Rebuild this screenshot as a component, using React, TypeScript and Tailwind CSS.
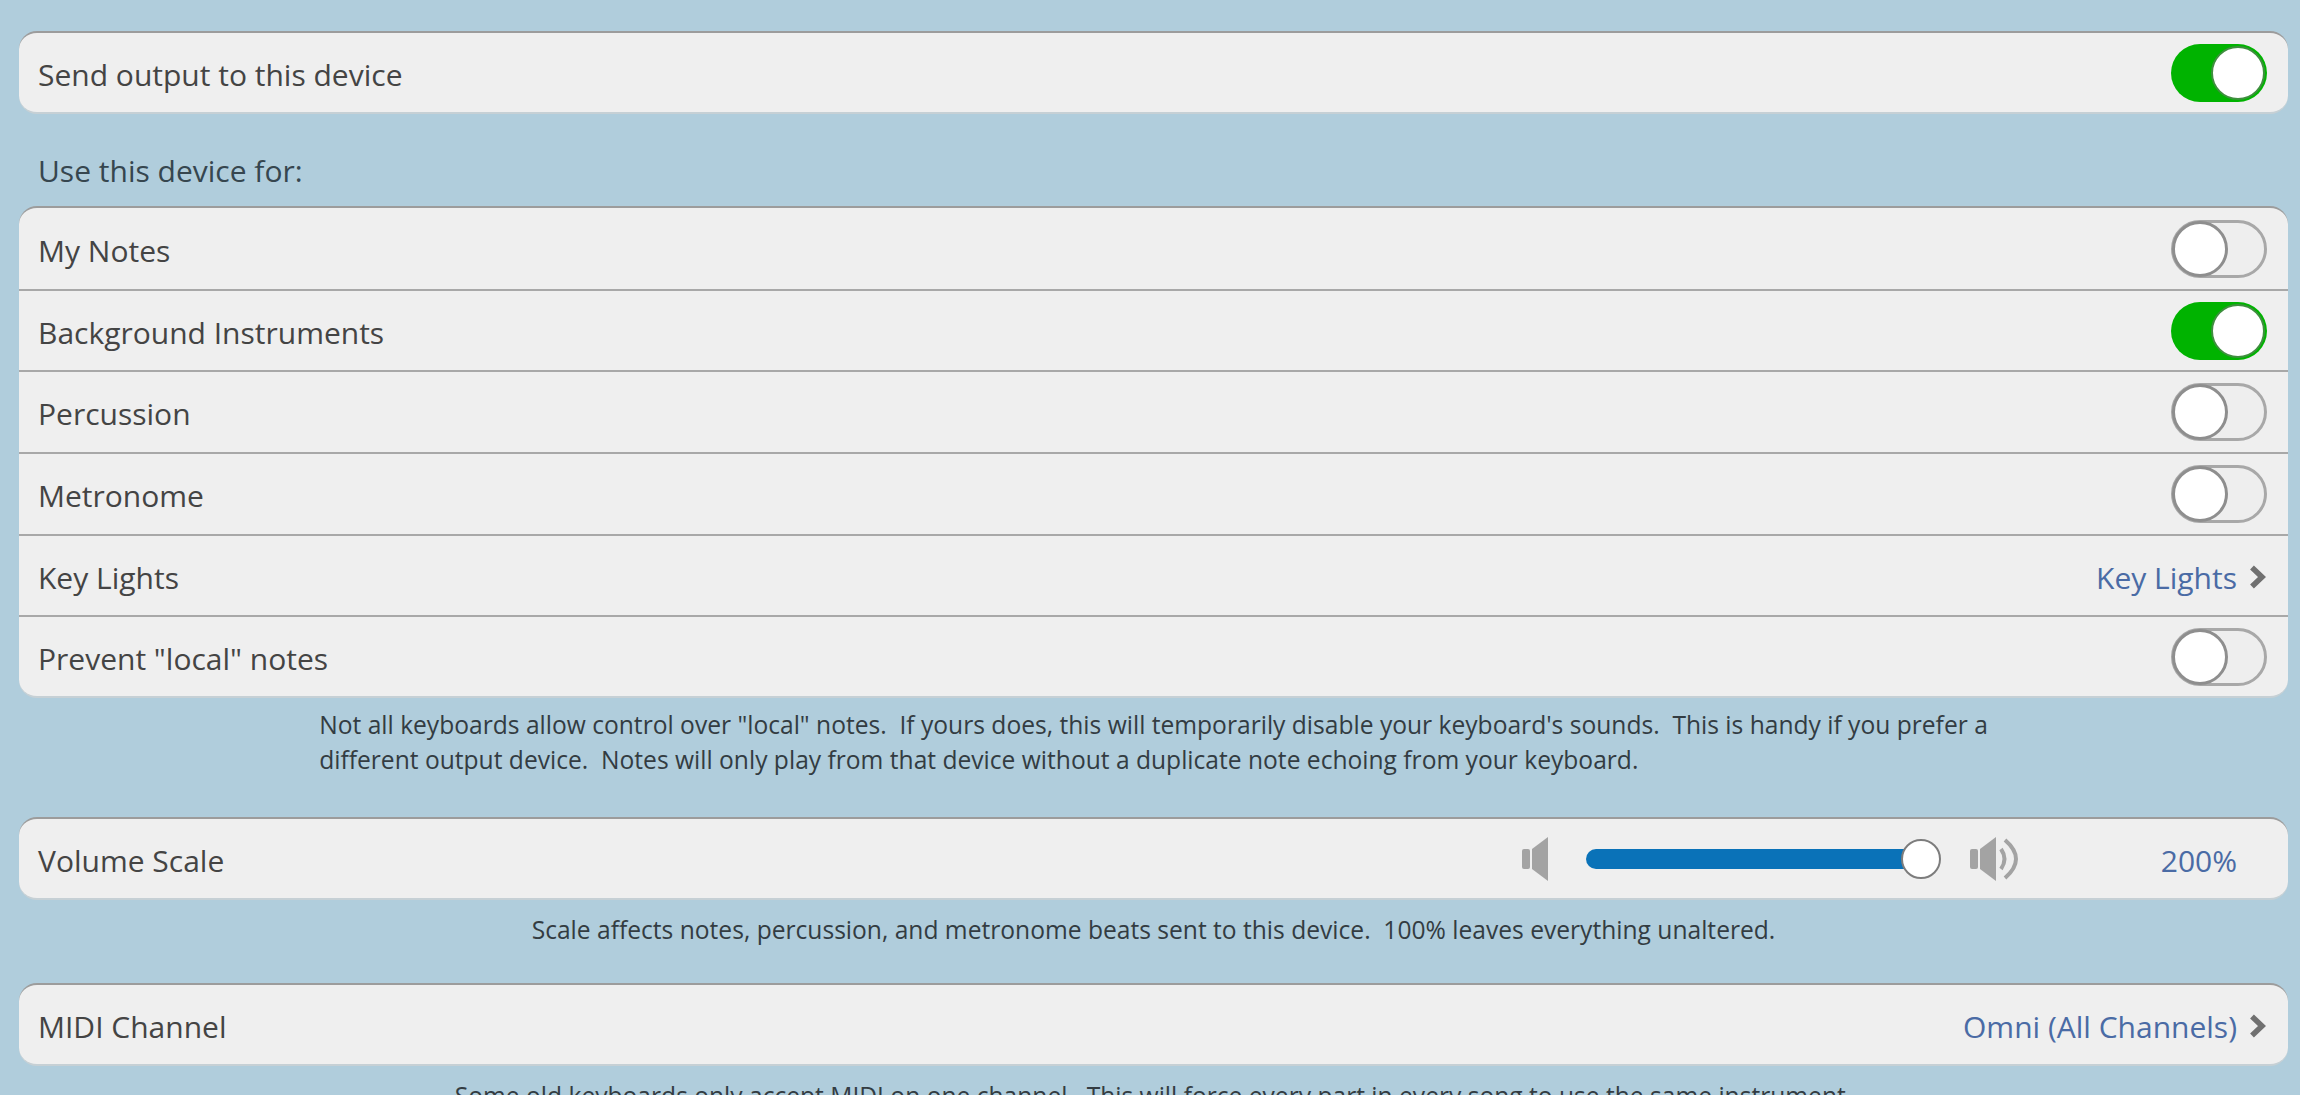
import React from "react";

const font = "font-['Open_Sans','Noto_Sans',sans-serif]";

const Toggle = ({ on }: { on?: boolean }) =>
  on ? (
    <div className="flex h-[58px] w-[96px] items-center justify-end rounded-full bg-[#00b300] pr-[2px]">
      <div className="h-[54px] w-[54px] rounded-full border-2 border-[#3f8f3f] bg-white" />
    </div>
  ) : (
    <div className="flex h-[58px] w-[96px] items-center rounded-full border-[3px] border-[#a8a8a8] bg-[#eeeeee]">
      <div className="-ml-[2px] h-[56px] w-[56px] shrink-0 rounded-full border-[3px] border-[#8e8e8e] bg-white" />
    </div>
  );

const Chevron = () => (
  <svg width="18" height="24" viewBox="0 0 18 24" className="ml-[12px] mt-[3px]">
    <path d="M3 2.5 L13 12 L3 21.5" fill="none" stroke="#707070" strokeWidth="5.5" />
  </svg>
);

const Row = ({ label, children, last }: { label: string; children?: React.ReactNode; last?: boolean }) => (
  <div className={`flex items-center justify-between pl-[19px] pr-[21px] ${last ? "h-[79px]" : "h-[81.7px] border-b-2 border-[#a8a8a8]"}`}>
    <span className="pt-[3px] text-[30px] text-[#444444]">{label}</span>
    {children}
  </div>
);

const Card = ({ children }: { children: React.ReactNode }) => (
  <div className="overflow-hidden rounded-[18px] border-t-2 border-b-2 border-t-[#9c9c9c] border-b-[#c6d0d5] bg-[#efefef]">{children}</div>
);

const Link = ({ text }: { text: string }) => (
  <span className="flex items-center">
    <span className="pt-[3px] text-[30px] text-[#4a6ba5]">{text}</span>
    <Chevron />
  </span>
);

const Note = ({ children }: { children: React.ReactNode }) => (
  <p className="mx-auto w-fit whitespace-pre text-[24.6px] leading-[35px] text-[#333c42]">{children}</p>
);

const SpeakerLow = () => (
  <svg width="28" height="46" viewBox="0 0 28 46">
    <rect x="1" y="13" width="8" height="20" rx="2" fill="#a3a3a3" />
    <path d="M11 13 L27 1 V45 L11 33 Z" fill="#a3a3a3" />
  </svg>
);

const SpeakerHigh = () => (
  <svg width="52" height="46" viewBox="0 0 52 46">
    <rect x="1" y="13" width="8" height="20" rx="2" fill="#a3a3a3" />
    <path d="M11 13 L27 1 V45 L11 33 Z" fill="#a3a3a3" />
    <path d="M32 13 Q39 23 32 33" fill="none" stroke="#a3a3a3" strokeWidth="4" />
    <path d="M36 4 Q58 23 36 42" fill="none" stroke="#a3a3a3" strokeWidth="4" />
  </svg>
);

export default function App() {
  return (
    <div className={`h-[1095px] overflow-hidden bg-[#b0cddc] pl-[19px] pr-[12px] pt-[31px] ${font}`}>
      <Card>
        <Row label="Send output to this device" last>
          <Toggle on />
        </Row>
      </Card>

      <div className="mt-[36px] mb-[14px] pl-[19px] text-[30px] leading-[42px] text-[#36464f]">Use this device for:</div>

      <Card>
        <div className="pt-[1px]">
          <Row label="My Notes"><Toggle /></Row>
          <Row label="Background Instruments"><Toggle on /></Row>
          <Row label="Percussion"><Toggle /></Row>
          <Row label="Metronome"><Toggle /></Row>
          <Row label="Key Lights"><Link text="Key Lights" /></Row>
          <Row label={'Prevent "local" notes'} last><Toggle /></Row>
        </div>
      </Card>

      <div className="mt-[9px]">
        <Note>
          {'Not all keyboards allow control over "local" notes.  If yours does, this will temporarily disable your keyboard\'s sounds.  This is handy if you prefer a\ndifferent output device.  Notes will only play from that device without a duplicate note echoing from your keyboard.'}
        </Note>
      </div>

      <div className="mt-[40px]">
        <Card>
          <Row label="Volume Scale" last>
            <div className="flex items-center">
              <SpeakerLow />
              <div className="relative ml-[37px] h-[20px] w-[335px] rounded-full bg-[#0a72b8]">
                <div className="absolute -right-[20px] -top-[10px] h-[40px] w-[40px] rounded-full border-2 border-[#7d7d7d] bg-white" />
              </div>
              <div className="ml-[48px]"><SpeakerHigh /></div>
              <span className="ml-[140px] mr-[30px] pt-[3px] text-[30px] text-[#4a6ba5]">200%</span>
            </div>
          </Row>
        </Card>
      </div>

      <div className="mt-[12px]"><Note>{"Scale affects notes, percussion, and metronome beats sent to this device.  100% leaves everything unaltered."}</Note></div>

      <div className="mt-[36px]">
        <Card>
          <Row label="MIDI Channel" last><Link text="Omni (All Channels)" /></Row>
        </Card>
      </div>

      <div className="mt-[12px]"><Note>{"Some old keyboards only accept MIDI on one channel.  This will force every part in every song to use the same instrument."}</Note></div>
    </div>
  );
}
